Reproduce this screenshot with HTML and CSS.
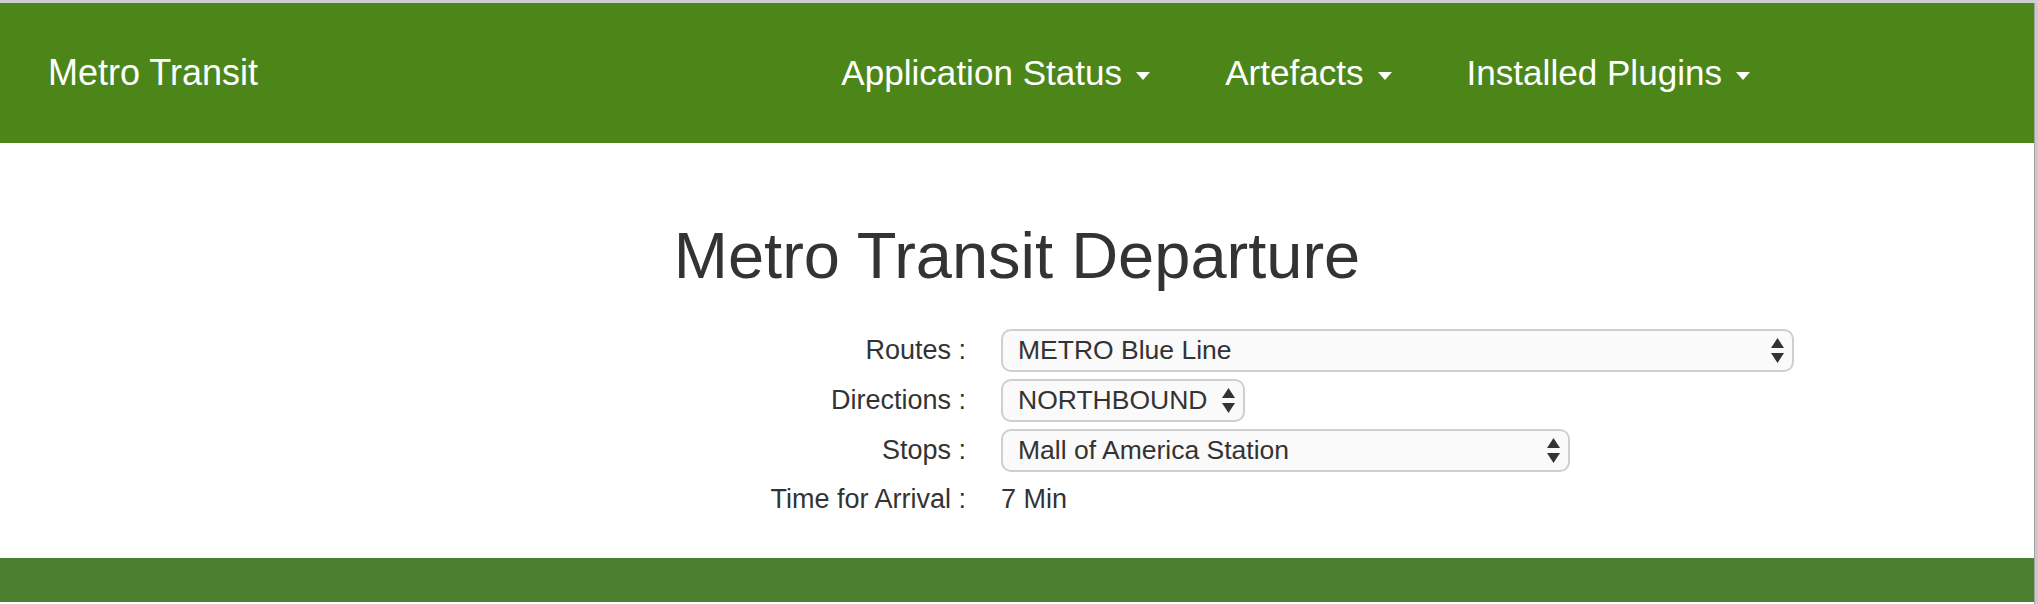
FILE: index.html
```html
<!DOCTYPE html>
<html lang="en">
<head>
<meta charset="utf-8">
<title>Metro Transit</title>
<link rel="stylesheet" href="styles.css">
</head>
<body>
<div class="window">
  <div class="page">
    <header class="navbar">
      <a class="brand" href="#">Metro Transit</a>
      <ul class="nav">
        <li><a href="#">Application Status<span class="caret"></span></a></li>
        <li><a href="#">Artefacts<span class="caret"></span></a></li>
        <li><a href="#">Installed Plugins<span class="caret"></span></a></li>
      </ul>
    </header>
    <main class="content">
      <h1 class="title">Metro Transit Departure</h1>
      <div class="form">
        <div class="label">Routes :</div>
        <div class="control">
          <div class="select select-wide">
            <span class="value">METRO Blue Line</span>
            <svg class="arrows" width="13" height="25" viewBox="0 0 13 25"><polygon points="0,10 6.5,0 13,10"/><polygon points="0,15 13,15 6.5,25"/></svg>
          </div>
        </div>
        <div class="label">Directions :</div>
        <div class="control">
          <div class="select select-auto">
            <span class="value">NORTHBOUND</span>
            <svg class="arrows" width="13" height="25" viewBox="0 0 13 25"><polygon points="0,10 6.5,0 13,10"/><polygon points="0,15 13,15 6.5,25"/></svg>
          </div>
        </div>
        <div class="label">Stops :</div>
        <div class="control">
          <div class="select select-mid">
            <span class="value">Mall of America Station</span>
            <svg class="arrows" width="13" height="25" viewBox="0 0 13 25"><polygon points="0,10 6.5,0 13,10"/><polygon points="0,15 13,15 6.5,25"/></svg>
          </div>
        </div>
        <div class="label label-time">Time for Arrival :</div>
        <div class="control control-time">7 Min</div>
      </div>
    </main>
    <footer class="footer"></footer>
  </div>
  <div class="edge"></div>
</div>
</body>
</html>
```
FILE: styles.css
```css
html, body {
  margin: 0;
  padding: 0;
  background: #ffffff;
}

body {
  font-family: "Liberation Sans", Arial, Helvetica, sans-serif;
  color: #333333;
  border-top: 3px solid #cfcfcf;
  height: 601px;
  overflow: hidden;
}

.window {
  display: flex;
  height: 601px;
}

.page {
  flex: 1;
  min-width: 0;
}

.edge {
  width: 4px;
  background: linear-gradient(to right, #a3a3a3 0, #a3a3a3 1px, #c9c9c9 1px, #c9c9c9 100%);
}

.navbar {
  display: flex;
  align-items: center;
  height: 140px;
  background: #4c8619;
  padding: 0 284px 0 48px;
}

.brand {
  color: #ffffff;
  text-decoration: none;
  font-size: 36px;
}

.nav {
  display: flex;
  gap: 75px;
  list-style: none;
  margin: 0 0 0 auto;
  padding: 0;
}

.nav a {
  color: #ffffff;
  text-decoration: none;
  font-size: 35.1px;
  display: flex;
  align-items: center;
}

.caret {
  display: inline-block;
  width: 0;
  height: 0;
  margin-left: 14px;
  margin-top: 6px;
  border-top: 8px solid #ffffff;
  border-left: 7.5px solid transparent;
  border-right: 7.5px solid transparent;
}

.content {
  padding-top: 77px;
  padding-bottom: 39px;
}

.title {
  margin: 0 0 37px 0;
  text-align: center;
  font-size: 65px;
  line-height: 72px;
  font-weight: 400;
  color: #333333;
}

.form {
  display: grid;
  grid-template-columns: 966px auto;
  column-gap: 35px;
  row-gap: 7px;
  font-size: 27px;
}

.label {
  text-align: right;
  height: 43px;
  display: flex;
  align-items: center;
  justify-content: flex-end;
}

.label-time, .control-time {
  height: 40px;
}

.control {
  display: flex;
  align-items: center;
}

.select {
  box-sizing: border-box;
  height: 43px;
  display: flex;
  align-items: center;
  background: #fafafa;
  border: 2px solid #cfcfcf;
  border-radius: 10px;
  padding: 0 8px 0 15px;
  color: #333333;
  font-size: 26.5px;
}

.select .value {
  flex: 1;
  white-space: nowrap;
}

.select-wide {
  width: 793px;
}

.select-mid {
  width: 569px;
}

.select-auto .value {
  flex: none;
  margin-right: 15px;
}

.arrows {
  fill: #333333;
  flex: none;
}

.footer {
  height: 44px;
  background: #4a802d;
}
```
